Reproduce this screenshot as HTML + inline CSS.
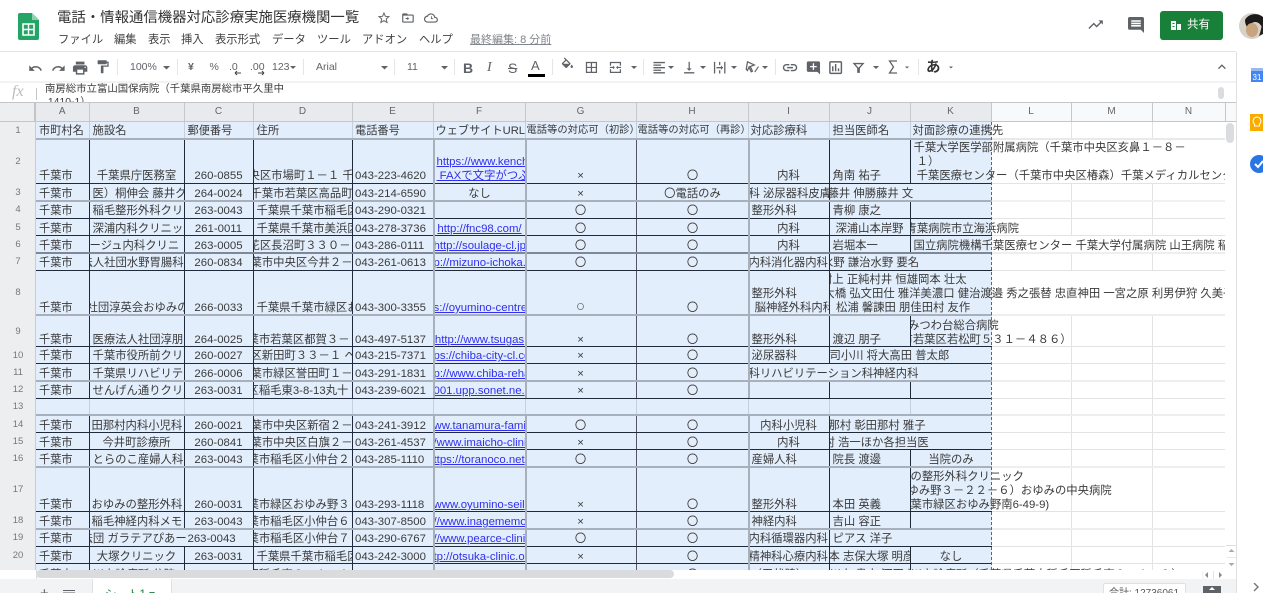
<!DOCTYPE html>
<html lang="ja"><head><meta charset="utf-8"><title>電話・情報通信機器対応診療実施医療機関一覧</title>
<style>
html,body{margin:0;padding:0;background:#fff}
body{position:relative;width:1263px;height:593px;overflow:hidden;font-family:"Liberation Sans","Noto Sans CJK JP",sans-serif;color:#3c4043}
#w{position:absolute;left:0;top:0;width:1263px;height:593px;overflow:hidden;filter:blur(.3px)}
.a{position:absolute;white-space:nowrap}
.m{top:32px;font-size:11.3px;line-height:16px;color:#444}
.tb{top:59px;font-size:10.5px;line-height:16px;color:#5f6368}
.sep{position:absolute;top:59px;width:1px;height:16px;background:#e4e6e8}
.ch{position:absolute;top:103px;height:18px;line-height:18px;background:#e8eaed;border-right:1px solid #c4c7cb;font-size:10px;color:#666;text-align:center;box-sizing:border-box}
.ch.w{background:#f8f9fa}
.rh{position:absolute;left:0;width:36px;background:#eceef0;font-size:9.5px;color:#777;display:flex;align-items:center;justify-content:center;box-sizing:border-box}
#grid{position:absolute;left:0;top:0;width:1225px;height:569.5px;overflow:hidden}
.r{position:absolute;left:0;width:1225px}
.c{position:absolute;top:0;height:100%;box-sizing:border-box;display:flex;align-items:flex-end;white-space:nowrap;overflow:hidden;font-size:11.35px;line-height:14px;color:#3a3a3a;padding:0 0 0 3px;border-right:1px solid #1e2a3a}
.c>span{flex:none}
.A{left:36px;width:53.5px;font-size:11.2px}.B{left:89.5px;width:95px}.C{left:184.5px;width:69px;font-size:11.4px}.D{left:253.5px;width:99px;padding-left:0}
.E{left:352.5px;width:81px;font-size:11.4px;padding-left:2.5px}.F{left:433.5px;width:92px;border-right:none;font-size:11.4px;padding-left:0}.G{left:525.5px;width:111px;border-right:1px solid #556}
.H{left:636.5px;width:112px;border-right:none}.I{left:748.5px;width:81px;padding-left:0}.J{left:829.5px;width:81px;padding-left:0}.K{left:910.5px;width:81px;border-right:none;padding-left:0}
.ct{justify-content:center;padding-left:0}
.u{color:#2f2ff0;text-decoration:underline}
.nb{border-right:none}
.l{display:block}
.hd .c{border-right:1px solid #c6d0dd;align-items:center;padding-bottom:0;padding-top:1px}
.hl{position:absolute;left:36px;width:955.5px}
.d{height:1px;background:#1f2b3b}
.g{height:2px;background:#a8b0bc}
.wl{position:absolute;left:991.5px;width:234px}
.v{position:absolute;width:1px;top:122px;height:448px;background:#e2e3e3}
.vg{position:absolute;width:2px;background:#a8b0bc}
</style></head><body><div id="w">

<!-- top chrome icons -->
<svg class="a" style="left:0;top:0" width="1263" height="102" viewBox="0 0 1263 102">
<path d="M21 13h11l7 7v18a2 2 0 0 1-2 2H20a2 2 0 0 1-2-2V15a2 2 0 0 1 2-2z" fill="#23a566"/>
<path d="M32 13l7 7h-7z" fill="#8ed1b1"/>
<path d="M23 24h11v11H23z" fill="none" stroke="#fff" stroke-width="1.6"/><path d="M23 29.5h11M28.5 24v11" stroke="#fff" stroke-width="1.4"/>
<g fill="#5f6368">
<g transform="translate(376.5,10.5) scale(.62)"><path d="M22 9.24l-7.19-.62L12 2 9.19 8.63 2 9.24l5.46 4.73L5.82 21 12 17.27 18.18 21l-1.63-7.03L22 9.24zM12 15.4l-3.76 2.27 1-4.28-3.32-2.88 4.38-.38L12 6.1l1.71 4.04 4.38.38-3.32 2.88 1 4.28L12 15.4z"/></g>
<g transform="translate(401,11) scale(.58)"><path d="M20 6h-8l-2-2H4c-1.1 0-2 .9-2 2v12c0 1.1.9 2 2 2h16c1.1 0 2-.9 2-2V8c0-1.1-.9-2-2-2zm0 12H4V8h16v10z"/><path d="M11 10l3 3-3 3v-2H8v-2h3z"/></g>
<g transform="translate(424,11) scale(.58)"><path d="M19.35 10.04C18.67 6.59 15.64 4 12 4 9.11 4 6.6 5.64 5.35 8.04 2.34 8.36 0 10.91 0 14c0 3.31 2.69 6 6 6h13c2.76 0 5-2.24 5-5 0-2.64-2.05-4.78-4.65-4.96zM19 18H6c-2.21 0-4-1.79-4-4 0-2.05 1.53-3.76 3.56-3.97l1.07-.11.5-.95C8.08 7.14 9.94 6 12 6c2.62 0 4.88 1.86 5.39 4.43l.3 1.5 1.53.11c1.56.1 2.78 1.41 2.78 2.96 0 1.65-1.35 3-3 3z"/><path d="M12 9v5h4v-1.5h-2.5V9z"/></g>
<g transform="translate(1087,16) scale(.72)"><path d="M2 16.59L3.41 18l6-6 4 4 6.3-6.29L22 12V6h-6l2.29 2.29-4.88 4.88-4-4z"/></g>
<g transform="translate(1126.400,15.400) scale(.8)"><path d="M21.99 4c0-1.1-.89-2-1.99-2H4c-1.1 0-2 .9-2 2v12c0 1.1.9 2 2 2h14l4 4-.01-18zM18 14H6v-2h12v2zm0-3H6V9h12v2zm0-3H6V6h12v2z"/></g>
<!-- toolbar -->
<g transform="translate(28,61) scale(.62)"><path d="M12.5 8c-2.65 0-5.05.99-6.9 2.6L2 7v9h9l-3.62-3.62c1.39-1.16 3.16-1.88 5.12-1.88 3.54 0 6.55 2.31 7.6 5.5l2.37-.78C21.08 11.03 17.15 8 12.5 8z"/></g>
<g transform="translate(51,61) scale(.62)"><path d="M18.4 10.6C16.55 8.99 14.15 8 11.5 8c-4.65 0-8.58 3.03-9.96 7.22L3.9 16c1.05-3.19 4.05-5.5 7.6-5.5 1.95 0 3.73.72 5.12 1.88L13 16h9V7l-3.6 3.6z"/></g>
<g transform="translate(71.500,59.500) scale(.72)"><path d="M19 8H5c-1.66 0-3 1.34-3 3v6h4v4h12v-4h4v-6c0-1.66-1.34-3-3-3zm-3 11H8v-5h8v5zm3-7c-.55 0-1-.45-1-1s.45-1 1-1 1 .45 1 1-.45 1-1 1zm-1-9H6v4h12V3z"/></g>
<g transform="translate(95,59) scale(.65)"><path d="M18 4V3c0-.55-.45-1-1-1H5c-.55 0-1 .45-1 1v4c0 .55.45 1 1 1h12c.55 0 1-.45 1-1V6h1v4H9v11c0 .55.45 1 1 1h2c.55 0 1-.45 1-1v-9h8V4h-3z"/></g>
<path d="M163 66h7l-3.5 3.5zM290 66h6l-3 3zM381 66h7l-3.5 3.5zM441 66h7l-3.5 3.5zM631 66h6l-3 3zM668 66h6l-3 3zM700 66h6l-3 3zM731 66h6l-3 3zM762 66h6l-3 3zM873 66h6l-3 3zM905 66.500h4l-2 2zM949 66.500h4l-2 2z"/>
<g transform="translate(560,57.500) scale(.62)"><path d="M16.56 8.94L7.62 0 6.21 1.41l2.38 2.38-5.15 5.15c-.59.59-.59 1.54 0 2.12l5.5 5.5c.29.29.68.44 1.06.44s.77-.15 1.06-.44l5.5-5.5c.59-.58.59-1.53 0-2.12zM5.21 10L10 5.21 14.79 10H5.21zM19 11.5s-2 2.17-2 3.5c0 1.1.9 2 2 2s2-.9 2-2c0-1.33-2-3.5-2-3.5z"/></g>
<g transform="translate(584,60) scale(.62)"><path d="M3 3v18h18V3H3zm8 16H5v-6h6v6zm0-8H5V5h6v6zm8 8h-6v-6h6v6zm0-8h-6V5h6v6z"/></g>
<g transform="translate(608,60) scale(.62)"><path d="M3 3h18v6h-2V5H5v4H3zM3 15h2v4h14v-4h2v6H3zM3 11h5V9l3 3-3 3v-2H3zM21 11h-5V9l-3 3 3 3v-2h5z"/></g>
<g transform="translate(651.500,60) scale(.64)"><path d="M15 15H3v2h12v-2zm0-8H3v2h12V7zM3 13h18v-2H3v2zm0 8h18v-2H3v2zM3 3v2h18V3H3z"/></g>
<g transform="translate(681.500,60) scale(.64)"><path d="M16 13h-3V3h-2v10H8l4 4 4-4zM4 19v2h16v-2H4z"/></g>
<g transform="translate(712,60) scale(.64)"><path d="M3 3h2v18H3zM19 3h2v18h-2zM11 3h2v5h-2zM11 16h2v5h-2zM7 11h7V8.5l3.5 3.500-3.500 3.500V13H7z"/></g>
<g transform="translate(745,60) scale(.62)"><path d="M4 3l11 5-6.500 2.500L12 18l-2 1-3.500-7.500L4 17 2 15z" fill="none" stroke="#5f6368" stroke-width="2"/><path d="M15 19l6-9 1.500 1-6 9z"/></g>
<g transform="translate(781.400,59) scale(.72)"><path d="M3.9 12c0-1.71 1.39-3.1 3.1-3.1h4V7H7c-2.76 0-5 2.24-5 5s2.24 5 5 5h4v-1.9H7c-1.71 0-3.1-1.39-3.1-3.1zM8 13h8v-2H8v2zm9-6h-4v1.9h4c1.71 0 3.1 1.39 3.1 3.1s-1.39 3.1-3.1 3.1h-4V17h4c2.76 0 5-2.24 5-5s-2.240-5-5-5z"/></g>
<g transform="translate(805.500,60) scale(.66)"><path d="M20 2H4c-1.1 0-2 .9-2 2v12c0 1.1.9 2 2 2h14l4 4V4c0-1.1-.9-2-2-2zm-3 9h-4v4h-2v-4H7V9h4V5h2v4h4v2z"/></g>
<g transform="translate(827,59) scale(.72)"><path d="M19 3H5c-1.1 0-2 .9-2 2v14c0 1.1.9 2 2 2h14c1.1 0 2-.9 2-2V5c0-1.1-.9-2-2-2zm0 16H5V5h14v14zM7 10h2v7H7zm4-3h2v10h-2zm4 6h2v4h-2z"/></g>
<g transform="translate(850.500,59.500) scale(.67)"><path d="M3 5h18l-7 8v7h-4v-7zM7.4 7l4.6 5.300L16.600 7z" fill-rule="evenodd"/></g>
<path d="M897 61h-7.500l4 6-4 6h7.500" fill="none" stroke="#5f6368" stroke-width="1.300"/>
<g transform="translate(1214,59) scale(.66)"><path d="M7.41 15.41L12 10.83l4.59 4.58L18 14l-6-6-6 6z"/></g>
</g>
<rect x="528" y="74" width="17" height="3" fill="#000"/>
<path d="M0 51.500h1236" stroke="#e2e3e5"/>
<path d="M0 82h1236" stroke="#f1f3f4" stroke-width="2"/>
<path d="M36.500 88v12" stroke="#c4c7c9"/>
<rect x="1218" y="87" width="6" height="12" rx="3" fill="#dadce0"/>
</svg>

<div class="a" style="left:57px;top:8px;font-size:14.4px;line-height:20px;color:#333">電話・情報通信機器対応診療実施医療機関一覧</div>
<div class="a m" style="left:58px">ファイル</div><div class="a m" style="left:114px">編集</div><div class="a m" style="left:148px">表示</div><div class="a m" style="left:181px">挿入</div><div class="a m" style="left:215px">表示形式</div><div class="a m" style="left:272px">データ</div><div class="a m" style="left:317px">ツール</div><div class="a m" style="left:362px">アドオン</div><div class="a m" style="left:419px">ヘルプ</div>
<div class="a m" style="left:470px;color:#80868b;text-decoration:underline;font-size:11px">最終編集: 8 分前</div>

<div class="a" style="left:1160px;top:11px;width:63px;height:29px;background:#188038;border-radius:3px"></div>
<svg class="a" style="left:1171px;top:20px" width="11" height="11"><path d="M0 1h5v9H0zM6 4h4v6H6z" fill="#fff"/><path d="M1.5 3h2v1h-2zM1.5 6h2v1h-2z" fill="#188038"/></svg>
<div class="a" style="left:1187px;top:16px;font-size:11.5px;line-height:18px;color:#fff">共有</div>
<svg class="a" style="left:1239px;top:12px" width="24" height="28"><circle cx="13" cy="14" r="13" fill="#d6d2c8"/><path d="M6 8c3-6 12-8 18-3v12c-2-4-4-7-8-7-3 0-6 3-7 6-2-2-3-5-3-8z" fill="#1c1a18"/><ellipse cx="13" cy="18" rx="6" ry="7" fill="#c9a27e"/><path d="M24 10v12l-4 2c2-5 2-9 4-14z" fill="#23201d"/></svg>

<!-- toolbar text -->
<div class="a tb" style="left:130px">100%</div>
<div class="a tb" style="left:188px;font-weight:bold">¥</div><div class="a tb" style="left:209.500px">%</div>
<div class="a tb" style="left:229px">.0</div><div class="a tb" style="left:250px">.00</div><div class="a tb" style="left:272px">123</div>
<div class="a tb" style="left:316px">Arial</div><div class="a tb" style="left:407px">11</div>
<svg class="a" style="left:234px;top:70px" width="40" height="6"><path d="M1 3h6M1 3l2-2M1 3l2 2M24 3h6M30 3l-2-2M30 3l-2 2" stroke="#444" fill="none"/></svg>
<div class="a" style="left:463px;top:59px;font-size:14px;line-height:18px;font-weight:bold;color:#5f6368">B</div>
<div class="a" style="left:487px;top:59px;font-size:14px;line-height:18px;font-style:italic;font-family:'Liberation Serif',serif;color:#5f6368">I</div>
<div class="a" style="left:508px;top:59px;font-size:14px;line-height:18px;text-decoration:line-through;color:#5f6368">S</div>
<div class="a" style="left:531px;top:57px;font-size:13px;line-height:18px;color:#5f6368">A</div>
<div class="a" style="left:926px;top:58px;font-size:14.5px;line-height:20px;font-weight:bold;color:#333">あ</div>
<div class="sep" style="left:117px"></div><div class="sep" style="left:177px"></div><div class="sep" style="left:303px"></div><div class="sep" style="left:394px"></div><div class="sep" style="left:454px"></div><div class="sep" style="left:552px"></div><div class="sep" style="left:643px"></div><div class="sep" style="left:775px"></div><div class="sep" style="left:918px"></div>

<!-- formula bar -->
<div class="a" style="left:12px;top:83px;font-family:'Liberation Serif',serif;font-style:italic;font-size:16px;line-height:18px;color:#bbb">fx</div>
<div class="a" style="left:45px;top:83px;height:19px;width:1100px;overflow:hidden;font-size:10.4px;line-height:13px;color:#3c3c3c">南房総市立富山国保病院（千葉県南房総市平久里中<br>&nbsp;1410-1）</div>

<!-- column header -->
<div class="a" style="left:0;top:102px;width:1236px;height:1px;background:#c4c7c9"></div>
<div class="a" style="left:0;top:103px;width:34px;height:18px;background:#eceef0;border-right:3px solid #c2c4c7;border-bottom:2px solid #c2c4c7"></div>
<div class="ch" style="left:36px;width:53.5px">A</div><div class="ch" style="left:89.5px;width:95px">B</div><div class="ch" style="left:184.5px;width:69px">C</div><div class="ch" style="left:253.5px;width:99px">D</div><div class="ch" style="left:352.5px;width:81px">E</div><div class="ch" style="left:433.5px;width:92px">F</div><div class="ch" style="left:525.5px;width:111px">G</div><div class="ch" style="left:636.5px;width:112px">H</div><div class="ch" style="left:748.5px;width:81px">I</div><div class="ch" style="left:829.5px;width:81px">J</div><div class="ch" style="left:910.5px;width:81px">K</div>
<div class="ch w" style="left:991.5px;width:80px">L</div><div class="ch w" style="left:1071.5px;width:81px">M</div><div class="ch w" style="left:1152.5px;width:73px">N</div>
<div class="a" style="left:1225.5px;top:103px;width:10px;height:18px;background:#f8f9fa"></div>
<div class="a" style="left:0;top:121px;width:1236px;height:1px;background:#c4c7c9"></div>

<!-- grid -->
<div id="grid">
<div class="a" style="left:991.5px;top:122px;width:234px;height:448px;background:#fff"></div>
<div class="v" style="left:1071px"></div><div class="v" style="left:1152px"></div><div class="v" style="left:1225px"></div>
<div class="wl" style="top:138px;height:2px;background:#e8e9ea"></div><div class="wl" style="top:183px;height:1px;background:#e2e3e3"></div><div class="wl" style="top:200px;height:2px;background:#f0f1f1"></div><div class="wl" style="top:218px;height:1px;background:#e2e3e3"></div><div class="wl" style="top:235px;height:1px;background:#e2e3e3"></div><div class="wl" style="top:252px;height:2px;background:#eee"></div><div class="wl" style="top:270px;height:1px;background:#e2e3e3"></div><div class="wl" style="top:314px;height:2px;background:#eee"></div><div class="wl" style="top:346px;height:1px;background:#e2e3e3"></div><div class="wl" style="top:363px;height:1px;background:#e2e3e3"></div><div class="wl" style="top:380px;height:2px;background:#eee"></div><div class="wl" style="top:398px;height:1px;background:#e2e3e3"></div><div class="wl" style="top:414px;height:2px;background:#eee"></div><div class="wl" style="top:432px;height:1px;background:#e2e3e3"></div><div class="wl" style="top:449px;height:1px;background:#e2e3e3"></div><div class="wl" style="top:466px;height:2px;background:#eee"></div><div class="wl" style="top:511px;height:1px;background:#e2e3e3"></div><div class="wl" style="top:528px;height:2px;background:#eee"></div><div class="wl" style="top:546px;height:1px;background:#e2e3e3"></div><div class="wl" style="top:563px;height:1px;background:#e2e3e3"></div>
<div class="a" style="left:991.5px;top:140px;width:234px;height:43px;background:#fff"></div>
<div class="a" style="left:991.5px;top:236px;width:234px;height:16px;background:#fff"></div>
<div class="a" style="left:991.5px;top:271px;width:234px;height:43px;background:#fff"></div>
<div class="a" style="left:36px;top:122px;width:955.5px;height:448px;background:#e3eefc"></div>

<!-- row headers -->
<div class="rh" style="top:122px;height:17px">1</div><div class="rh" style="top:139px;height:44px">2</div><div class="rh" style="top:183px;height:18px">3</div><div class="rh" style="top:201px;height:17px">4</div><div class="rh" style="top:218px;height:18px">5</div><div class="rh" style="top:236px;height:17px">6</div><div class="rh" style="top:253px;height:17px">7</div><div class="rh" style="top:270px;height:45px">8</div><div class="rh" style="top:315px;height:32px">9</div><div class="rh" style="top:347px;height:16px">10</div><div class="rh" style="top:363px;height:18px">11</div><div class="rh" style="top:381px;height:17px">12</div><div class="rh" style="top:398px;height:17px">13</div><div class="rh" style="top:415px;height:18px">14</div><div class="rh" style="top:433px;height:17px">15</div><div class="rh" style="top:450px;height:17px">16</div><div class="rh" style="top:467px;height:45px">17</div><div class="rh" style="top:512px;height:17px">18</div><div class="rh" style="top:529px;height:17px">19</div><div class="rh" style="top:546px;height:18px">20</div><div class="rh" style="top:564px;height:6px"></div>
<div class="a" style="left:35px;top:122px;width:1px;height:448px;background:#c9ccd0"></div>

<div class="r hd" style="top:122px;height:17px">
<div class="c A"><span>市町村名</span></div><div class="c B"><span>施設名</span></div><div class="c C" style="font-size:11.2px"><span>郵便番号</span></div><div class="c D" style="padding-left:3px"><span>住所</span></div><div class="c E" style="font-size:11.2px"><span>電話番号</span></div><div class="c F" style="padding-left:2px;font-size:11.2px"><span>ウェブサイトURL</span></div><div class="c G" style="padding-left:1px;font-size:10.3px"><span>電話等の対応可（初診）</span></div><div class="c H" style="padding-left:1px;font-size:10.3px"><span>電話等の対応可（再診）</span></div><div class="c I" style="padding-left:2px"><span>対応診療科</span></div><div class="c J" style="padding-left:3px"><span>担当医師名</span></div><div class="c K" style="width:120px;padding-left:2px;border-right:none"><span>対面診療の連携先</span></div>
</div>

<div class="r" style="top:139px;height:44px">
<div class="c A"><span>千葉市</span></div><div class="c B ct"><span>千葉県庁医務室</span></div><div class="c C ct"><span>260-0855</span></div><div class="c D"><span style="margin-left:-5px">央区市場町１－１ 千</span></div><div class="c E"><span>043-223-4620</span></div><div class="c F"><span class="u" style="margin-left:3px">https://www.kench<br>&nbsp;FAXで文字がつぶ</span></div><div class="c G ct"><span>×</span></div><div class="c H ct"><span>〇</span></div><div class="c I ct"><span>内科</span></div><div class="c J" style="padding-left:3px"><span>角南 祐子</span></div><div class="c K nb" style="width:314.5px;padding-left:3px"><span>千葉大学医学部附属病院（千葉市中央区亥鼻１－８－<br>&nbsp;１）<br>&nbsp;千葉医療センター（千葉市中央区椿森）千葉メディカルセンター</span></div>
</div>

<div class="r" style="top:183px;height:18px">
<div class="c A"><span>千葉市</span></div><div class="c B"><span>医）桐伸会 藤井ク</span></div><div class="c C ct"><span>264-0024</span></div><div class="c D"><span style="margin-left:-3px">千葉市若葉区高品町</span></div><div class="c E"><span>043-214-6590</span></div><div class="c F ct" style="color:#3a3a3a;font-size:11.2px"><span>なし</span></div><div class="c G ct"><span>×</span></div><div class="c H ct"><span>〇電話のみ</span></div><div class="c I"><span>科 泌尿器科皮膚</span></div><div class="c J nb" style="width:100px"><span style="margin-left:-2px">藤井 伸勝藤井 文</span></div>
</div>

<div class="r" style="top:201px;height:17px">
<div class="c A"><span>千葉市</span></div><div class="c B"><span>稲毛整形外科クリ</span></div><div class="c C ct"><span>263-0043</span></div><div class="c D" style="padding-left:3px"><span>千葉県千葉市稲毛区</span></div><div class="c E"><span>043-290-0321</span></div><div class="c F"></div><div class="c G ct"><span>〇</span></div><div class="c H ct"><span>〇</span></div><div class="c I" style="padding-left:3px"><span>整形外科</span></div><div class="c J" style="padding-left:3px"><span>青柳 康之</span></div><div class="c K"></div>
</div>

<div class="r" style="top:218px;height:18px">
<div class="c A"><span>千葉市</span></div><div class="c B"><span>深浦内科クリニッ</span></div><div class="c C ct"><span>261-0011</span></div><div class="c D" style="padding-left:3px"><span>千葉県千葉市美浜区</span></div><div class="c E"><span>043-278-3736</span></div><div class="c F ct"><span class="u">http://fnc98.com/</span></div><div class="c G ct"><span>〇</span></div><div class="c H ct"><span>〇</span></div><div class="c I ct"><span>内科</span></div><div class="c J ct"><span>深浦山本岸野</span></div><div class="c K nb" style="width:150px"><span style="margin-left:-5px">青葉病院市立海浜病院</span></div>
</div>

<div class="r" style="top:236px;height:17px">
<div class="c A"><span>千葉市</span></div><div class="c B"><span style="margin-left:-3px">ージュ内科クリニ</span></div><div class="c C ct"><span>263-0005</span></div><div class="c D"><span style="margin-left:-5px">花区長沼町３３０－</span></div><div class="c E"><span>043-286-0111</span></div><div class="c F"><span class="u">http://soulage-cl.jp/</span></div><div class="c G ct"><span>〇</span></div><div class="c H ct"><span>〇</span></div><div class="c I ct"><span>内科</span></div><div class="c J" style="padding-left:3px"><span>岩堀本一</span></div><div class="c K nb" style="width:314.5px;padding-left:3px"><span>国立病院機構千葉医療センター 千葉大学付属病院 山王病院 稲毛病院</span></div>
</div>

<div class="r" style="top:253px;height:17px">
<div class="c A"><span>千葉市</span></div><div class="c B"><span style="margin-left:-11px">法人社団水野胃腸科</span></div><div class="c C ct"><span>260-0834</span></div><div class="c D"><span style="margin-left:-3px">葉市中央区今井２－</span></div><div class="c E"><span>043-261-0613</span></div><div class="c F"><span class="u">p://mizuno-ichoka.</span></div><div class="c G ct"><span>〇</span></div><div class="c H ct"><span>〇</span></div><div class="c I"><span>内科消化器内科</span></div><div class="c J nb" style="width:110px"><span style="margin-left:-7.5px">水野 謙治水野 要名</span></div>
</div>

<div class="r" style="top:270px;height:45px">
<div class="c A"><span>千葉市</span></div><div class="c B"><span style="margin-left:-6px">社団淳英会おゆみの</span></div><div class="c C ct"><span>266-0033</span></div><div class="c D" style="padding-left:3px"><span>千葉県千葉市緑区お</span></div><div class="c E"><span>043-300-3355</span></div><div class="c F"><span class="u">s://oyumino-centre</span></div><div class="c G ct" style="font-size:7px"><span>〇</span></div><div class="c H ct"><span>〇</span></div><div class="c I" style="padding-left:3px"><span>整形外科<br>&nbsp;脳神経外科内科</span></div><div class="c J nb" style="width:395.5px"><span><span class="l" style="margin-left:-8.5px">村上 正純村井 恒雄岡本 壮太</span><span class="l" style="margin-left:-6px">大橋 弘文田仕 雅洋美濃口 健治渡邉 秀之張替 忠直神田 一宮之原 利男伊狩 久美子</span><span class="l" style="margin-left:6.5px">松浦 馨諫田 朋佳田村 友作</span></span></div>
</div>

<div class="r" style="top:315px;height:32px">
<div class="c A"><span>千葉市</span></div><div class="c B"><span>医療法人社団淳朋</span></div><div class="c C ct"><span>264-0025</span></div><div class="c D"><span style="margin-left:-6px">葉市若葉区都賀３－</span></div><div class="c E"><span>043-497-5137</span></div><div class="c F ct"><span class="u">http://www.tsugas</span></div><div class="c G ct"><span>×</span></div><div class="c H ct"><span>〇</span></div><div class="c I" style="padding-left:3px"><span>整形外科</span></div><div class="c J" style="padding-left:3px"><span>渡辺 朋子</span></div><div class="c K nb" style="width:200px"><span><span class="l" style="margin-left:-2.5px">みつわ台総合病院</span><span class="l" style="margin-left:-9px">市若葉区若松町５３１－４８６）</span></span></div>
</div>

<div class="r" style="top:347px;height:16px">
<div class="c A"><span>千葉市</span></div><div class="c B"><span>千葉市役所前クリ</span></div><div class="c C ct"><span>260-0027</span></div><div class="c D"><span style="margin-left:-3px">区新田町３３－１ ヘ</span></div><div class="c E"><span>043-215-7371</span></div><div class="c F"><span class="u">ps://chiba-city-cl.co</span></div><div class="c G ct"><span>×</span></div><div class="c H ct"><span>〇</span></div><div class="c I" style="padding-left:3px"><span>泌尿器科</span></div><div class="c J nb" style="width:130px"><span>司小川 将大高田 普太郎</span></div>
</div>

<div class="r" style="top:363px;height:18px">
<div class="c A"><span>千葉市</span></div><div class="c B"><span>千葉県リハビリテ</span></div><div class="c C ct"><span>266-0006</span></div><div class="c D"><span style="margin-left:-3px">葉市緑区誉田町１－</span></div><div class="c E"><span>043-291-1831</span></div><div class="c F"><span class="u">p://www.chiba-reha</span></div><div class="c G ct"><span>×</span></div><div class="c H ct"><span>〇</span></div><div class="c I nb" style="width:190px"><span>科リハビリテーション科神経内科</span></div>
</div>

<div class="r" style="top:381px;height:17px">
<div class="c A"><span>千葉市</span></div><div class="c B"><span>せんげん通りクリ</span></div><div class="c C ct"><span>263-0031</span></div><div class="c D"><span style="margin-left:-6px">区稲毛東3-8-13丸十</span></div><div class="c E"><span>043-239-6021</span></div><div class="c F"><span class="u">001.upp.sonet.ne.</span></div><div class="c G ct"><span>×</span></div><div class="c H ct"><span>〇</span></div><div class="c I"></div><div class="c J"></div><div class="c K"></div>
</div>

<div class="r" style="top:398px;height:17px">
<div class="c A" style="border-right-color:#c6d0dd"></div><div class="c B" style="border-right-color:#c6d0dd"></div><div class="c C" style="border-right-color:#c6d0dd"></div><div class="c D" style="border-right-color:#c6d0dd"></div><div class="c G" style="border-right-color:#c6d0dd"></div><div class="c I" style="border-right-color:#c6d0dd"></div><div class="c J" style="border-right-color:#c6d0dd"></div>
</div>

<div class="r" style="top:415px;height:18px">
<div class="c A"><span>千葉市</span></div><div class="c B"><span style="margin-left:-1px">田那村内科小児科</span></div><div class="c C ct"><span>260-0021</span></div><div class="c D"><span style="margin-left:-3px">葉市中央区新宿２－</span></div><div class="c E"><span>043-241-3912</span></div><div class="c F"><span class="u">ww.tanamura-fami</span></div><div class="c G ct"><span>〇</span></div><div class="c H ct"><span>〇</span></div><div class="c I ct"><span>内科小児科</span></div><div class="c J nb" style="width:100px"><span style="margin-left:-1px">那村 彰田那村 雅子</span></div>
</div>

<div class="r" style="top:433px;height:17px">
<div class="c A"><span>千葉市</span></div><div class="c B ct"><span>今井町診療所</span></div><div class="c C ct"><span>260-0841</span></div><div class="c D"><span style="margin-left:-3px">葉市中央区白旗２－</span></div><div class="c E"><span>043-261-4537</span></div><div class="c F"><span class="u">/www.imaicho-clini</span></div><div class="c G ct"><span>×</span></div><div class="c H ct"><span>〇</span></div><div class="c I ct"><span>内科</span></div><div class="c J nb" style="width:110px"><span style="margin-left:-6px">村 浩一ほか各担当医</span></div>
</div>

<div class="r" style="top:450px;height:17px">
<div class="c A"><span>千葉市</span></div><div class="c B"><span>とらのこ産婦人科</span></div><div class="c C ct"><span>263-0043</span></div><div class="c D"><span style="margin-left:-6px">葉市稲毛区小仲台２</span></div><div class="c E"><span>043-285-1110</span></div><div class="c F"><span class="u">ttps://toranoco.net</span></div><div class="c G ct"><span>〇</span></div><div class="c H ct"><span>〇</span></div><div class="c I" style="padding-left:3px"><span>産婦人科</span></div><div class="c J" style="padding-left:3px"><span>院長 渡邊</span></div><div class="c K ct"><span>当院のみ</span></div>
</div>

<div class="r" style="top:467px;height:45px">
<div class="c A"><span>千葉市</span></div><div class="c B"><span style="margin-left:-1px">おゆみの整形外科</span></div><div class="c C ct"><span>260-0031</span></div><div class="c D"><span style="margin-left:-6px">葉市緑区おゆみ野３</span></div><div class="c E"><span>043-293-1118</span></div><div class="c F"><span class="u">www.oyumino-seil</span></div><div class="c G ct"><span>×</span></div><div class="c H ct"><span>〇</span></div><div class="c I" style="padding-left:3px"><span>整形外科</span></div><div class="c J" style="padding-left:3px"><span>本田 英義</span></div><div class="c K nb" style="width:300px"><span><span class="l">の整形外科クリニック</span><span class="l" style="margin-left:-3px">ゆみ野３－２２－６）おゆみの中央病院</span><span class="l">葉市緑区おゆみ野南6-49-9)</span></span></div>
</div>

<div class="r" style="top:512px;height:17px">
<div class="c A"><span>千葉市</span></div><div class="c B"><span style="margin-left:-1px">稲毛神経内科メモ</span></div><div class="c C ct"><span>263-0043</span></div><div class="c D"><span style="margin-left:-6px">葉市稲毛区小仲台６</span></div><div class="c E"><span>043-307-8500</span></div><div class="c F"><span class="u">//www.inagememo</span></div><div class="c G ct"><span>×</span></div><div class="c H ct"><span>〇</span></div><div class="c I" style="padding-left:3px"><span>神経内科</span></div><div class="c J" style="padding-left:3px"><span>吉山 容正</span></div><div class="c K"></div>
</div>

<div class="r" style="top:529px;height:17px">
<div class="c A"><span>千葉市</span></div><div class="c B nb" style="width:98px;padding-left:0"><span style="margin-left:-8px">法団 ガラテアぴあーす</span></div><div class="c C" style="padding-left:3px"><span>263-0043</span></div><div class="c D"><span style="margin-left:-6px">葉市稲毛区小仲台７</span></div><div class="c E"><span>043-290-6767</span></div><div class="c F"><span class="u">//www.pearce-clini</span></div><div class="c G ct"><span>〇</span></div><div class="c H ct"><span>〇</span></div><div class="c I"><span>内科循環器内科</span></div><div class="c J nb" style="padding-left:3px"><span>ピアス 洋子</span></div>
</div>

<div class="r" style="top:546px;height:18px">
<div class="c A"><span>千葉市</span></div><div class="c B ct"><span>大塚クリニック</span></div><div class="c C ct"><span>263-0031</span></div><div class="c D" style="padding-left:3px"><span>千葉県千葉市稲毛区</span></div><div class="c E"><span>043-242-3000</span></div><div class="c F"><span class="u">tp://otsuka-clinic.or</span></div><div class="c G ct"><span>×</span></div><div class="c H ct"><span>〇</span></div><div class="c I"><span>精神科心療内科</span></div><div class="c J"><span style="margin-left:-1px">本 志保大塚 明彦</span></div><div class="c K ct"><span>なし</span></div>
</div>

<div class="r" style="top:564px;height:18px">
<div class="c A"><span>千葉市</span></div><div class="c B"><span>川上診療所 分院</span></div><div class="c C ct"><span>263-0031</span></div><div class="c D"><span style="margin-left:-6px">区稲毛東３－１－１</span></div><div class="c E"><span>043-244-3011</span></div><div class="c F"></div><div class="c G"></div><div class="c H ct"><span>〇</span></div><div class="c I" style="padding-left:2px"><span>（甲状腺）</span></div><div class="c J"><span>川上 貴之 河田 誠</span></div><div class="c K nb" style="width:314.5px"><span>川上診療所（千葉県千葉市稲毛区稲毛東３－１－９）</span></div>
</div>

<!-- horizontal lines -->
<div class="hl g" style="top:138px"></div><div class="hl d" style="top:183px"></div><div class="hl g" style="top:200px"></div><div class="hl d" style="top:218px"></div><div class="hl d" style="top:235px"></div><div class="hl g" style="top:252px;background:#7f8896"></div><div class="hl d" style="top:270px"></div><div class="hl g" style="top:314px"></div><div class="hl d" style="top:346px"></div><div class="hl d" style="top:363px"></div><div class="hl g" style="top:380px"></div><div class="hl d" style="top:398px"></div><div class="hl g" style="top:414px"></div><div class="hl d" style="top:432px"></div><div class="hl d" style="top:449px"></div><div class="hl g" style="top:466px"></div><div class="hl d" style="top:511px"></div><div class="hl g" style="top:528px"></div><div class="hl d" style="top:546px"></div><div class="hl d" style="top:563px"></div>
<!-- vertical gray lines -->
<div class="vg" style="left:432.5px;top:139px;height:259px"></div><div class="vg" style="left:524.5px;top:139px;height:259px"></div><div class="vg" style="left:747.5px;top:139px;height:259px"></div>
<div class="vg" style="left:432.5px;top:415px;height:155px"></div><div class="vg" style="left:524.5px;top:415px;height:155px"></div><div class="vg" style="left:747.5px;top:415px;height:155px"></div>
<div class="vg" style="left:433px;top:399px;height:15px;width:1px;background:#c6d0dd"></div><div class="vg" style="left:525px;top:399px;height:15px;width:1px;background:#c6d0dd"></div><div class="vg" style="left:748px;top:399px;height:15px;width:1px;background:#c6d0dd"></div>
<!-- dashed selection -->
<div class="a" style="left:991px;top:122px;height:448px;border-left:1px dashed #1a73e8"></div>
</div>

<!-- bottom -->
<div class="a" style="left:0;top:569.5px;width:1236px;height:10px;background:#fff"></div>
<div class="a" style="left:36px;top:570px;width:638px;height:8px;background:#dadbdd;border-radius:4px"></div>
<div class="a" style="left:36px;top:570px;width:1px;height:9px;background:#dadce0"></div>
<svg class="a" style="left:1202px;top:571px" width="24" height="8"><path d="M6 1v6L3 4zM17 1v6l3-3z" fill="#888"/><path d="M0 0v8M11.5 0v8" stroke="#e5e5e5"/></svg>
<div class="a" style="left:1226px;top:545px;width:10px;height:25px;background:#fff;border-top:1px solid #ddd"></div>
<svg class="a" style="left:1227px;top:546px" width="9" height="24"><path d="M4.5 3l3 3h-6zM1.5 17h6l-3 3z" fill="#aaa"/><path d="M0 11.5h9" stroke="#e8e8e8"/></svg>
<div class="a" style="left:0;top:579px;width:1236px;height:14px;background:#f1f3f4"></div>
<div class="a" style="left:40px;top:586px;font-size:15px;line-height:16px;color:#5f6368">+</div>
<svg class="a" style="left:63px;top:590px" width="12" height="3"><path d="M0 0h12v1H0zM0 2.500h12V3H0z" fill="#5f6368"/></svg>
<div class="a" style="left:92px;top:579px;width:80px;height:14px;background:#fff;overflow:hidden;font-size:11.5px;line-height:18px;color:#188038;border-left:1px solid #e0e0e0;border-right:1px solid #e0e0e0;box-sizing:border-box;padding:6.5px 0 0 12px">シート1 ▾</div>
<div class="a" style="left:1103px;top:583px;width:83px;height:10px;background:#fff;border:1px solid #e0e0e0;border-bottom:none;box-sizing:border-box;border-radius:2px 2px 0 0;overflow:hidden;font-size:10px;line-height:14px;color:#555;padding:3px 0 0 5px">合計: 12736061</div>
<svg class="a" style="left:1203px;top:586px" width="18" height="7"><path d="M0 0h18v7H0z" fill="#5f6368"/><path d="M9 1l3 3H6z" fill="#fff"/></svg>

<!-- side panel -->
<div class="a" style="left:1236px;top:52px;width:1px;height:541px;background:#e0e0e0"></div>
<div class="a" style="left:1226px;top:123px;width:8px;height:20px;background:#dadce0;border-radius:4px"></div>
<svg class="a" style="left:1247px;top:60px" width="16" height="120">
<path d="M4 8h12v14H4z" fill="#4285f4"/><path d="M4 8h12v3H4z" fill="#9ab8ee"/><text x="5.5" y="20" font-size="8" font-family="Liberation Sans" fill="#fff">31</text>
<path d="M3 54h13v17H3z" fill="#f9ab00"/><path d="M10 57a4 4 0 0 0-2.5 7v2h5v-2A4 4 0 0 0 10 57z" fill="none" stroke="#fff"/>
<circle cx="12" cy="104" r="9" fill="#2a75e6"/><path d="M8 104l3 3 5-6" stroke="#fff" stroke-width="2" fill="none"/>
</svg>
<svg class="a" style="left:1253px;top:583px" width="8" height="10"><path d="M1 0l4 4-4 4" stroke="#777" stroke-width="1.4" fill="none"/></svg>
</div></body></html>
